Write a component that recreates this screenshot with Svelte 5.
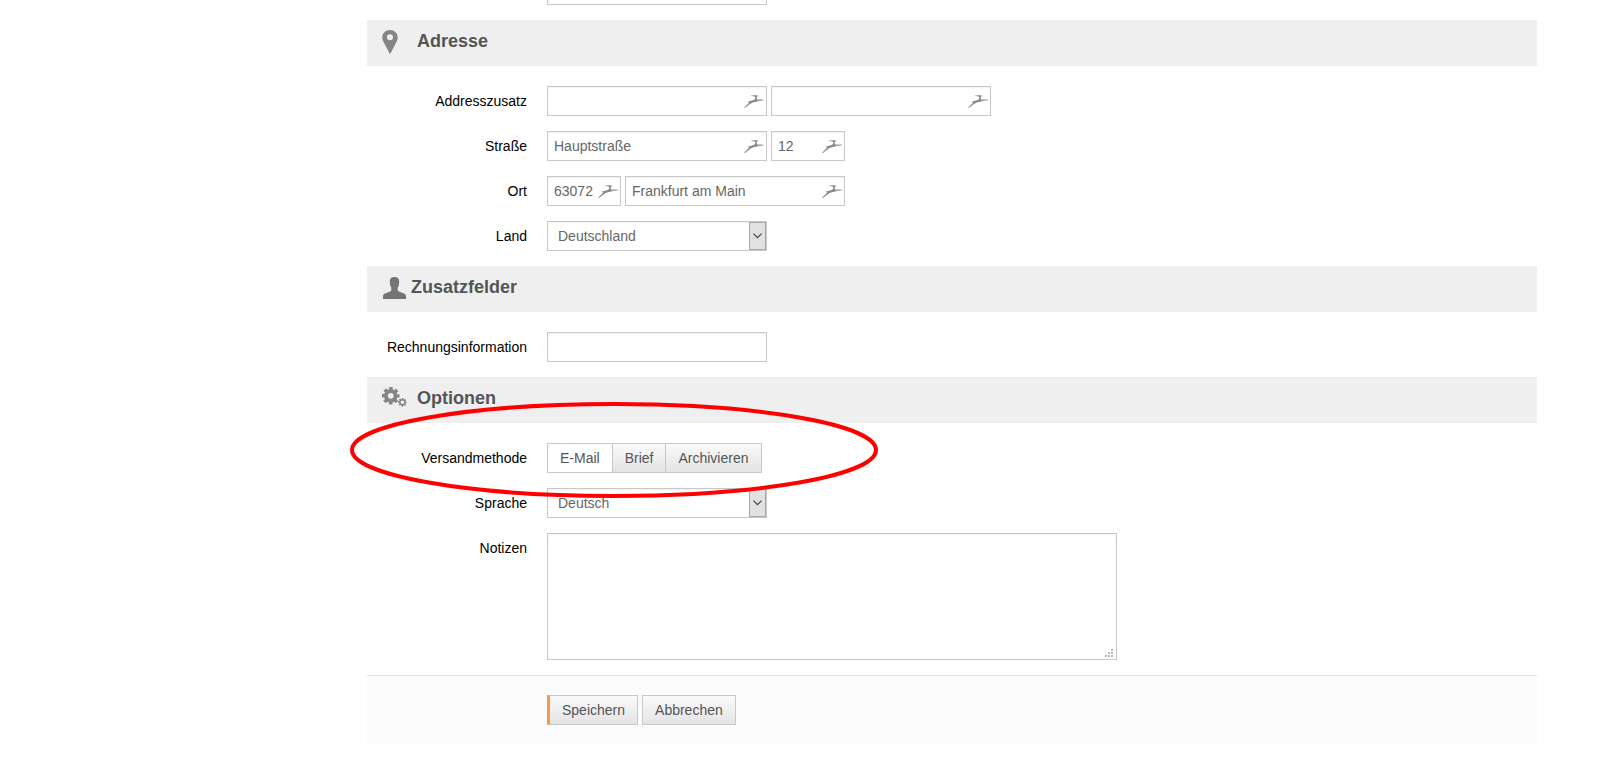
<script lang="ts">
  type Field = { id: string; label: string; value: string; short?: boolean };
  type Row = { label: string; fields: Field[] };

  const methods = ['E-Mail', 'Brief', 'Archivieren'];

  const addressRows: Row[] = $state([
    {
      label: 'Addresszusatz',
      fields: [
        { id: 'addition-1', label: 'Addresszusatz', value: '' },
        { id: 'addition-2', label: 'Addresszusatz 2', value: '' },
      ],
    },
    {
      label: 'Straße',
      fields: [
        { id: 'street', label: 'Straße', value: 'Hauptstraße' },
        { id: 'number', label: 'Hausnummer', value: '12', short: true },
      ],
    },
    {
      label: 'Ort',
      fields: [
        { id: 'zip', label: 'Postleitzahl', value: '63072', short: true },
        { id: 'city', label: 'Ort', value: 'Frankfurt am Main' },
      ],
    },
  ]);

  let phone = $state('');
  let country = $state('Deutschland');
  let invoiceInfo = $state('');
  let method = $state('E-Mail');
  let language = $state('Deutsch');
  let notes = $state('');
</script>

{#snippet dropdown(id: string, value: string, options: string[], onchange: (v: string) => void)}
  <div class="select">
    <select {id} {value} onchange={(e) => onchange(e.currentTarget.value)}>
      {#each options as opt}
        <option value={opt}>{opt}</option>
      {/each}
    </select>
    <span class="arrow">
      <svg width="9" height="6" viewBox="0 0 9 6" aria-hidden="true">
        <path d="M.5 .7 4.5 4.7 8.5 .7" fill="none" stroke="#444" stroke-width="1.2" />
      </svg>
    </span>
  </div>
{/snippet}

<form onsubmit={(e) => e.preventDefault()}>
  <div class="rows">
    <div class="row">
      <span class="name"></span>
      <input type="text" aria-label="Telefon" bind:value={phone} />
    </div>
  </div>

  <header>
    <svg width="30" height="24" viewBox="0 0 30 24" aria-hidden="true">
      <path
        fill="#858585"
        fill-rule="evenodd"
        d="M8 0c4.500 0 7.700 3.200 7.700 7.500 0 1.800-.6 3.400-1.500 5L8 24.200 1.800 12.500C.9 10.900.3 9.300.3 7.500.3 3.200 3.500 0 8 0zm0 4.300a3 3 0 1 0 0 6 3 3 0 0 0 0-6z"
      />
    </svg>
    <h2>Adresse</h2>
  </header>

  <div class="rows">
    {#each addressRows as row}
      <div class="row">
        <label class="name" for={row.fields[0].id}>{row.label}</label>
        {#each row.fields as field}
          <div class="field" class:short={field.short}>
            <input type="text" id={field.id} aria-label={field.label} bind:value={field.value} />
            <svg class="bird" width="20" height="14" viewBox="0 0 20 14" aria-hidden="true">
              <g fill="#8a8a8a">
                <path d="M6.300 .800 10 .200h3.700v1.300l-.8.500-.2 2.600 1.200.8-.8 1.200-4.300.9-3.200 1.800L.8 13.300l-.4-.8 4.800-4.900-1.800-.8 4.600-1.200 2.600-1.100.9-2.500-1.200-.6z" />
                <path d="M12.500 4.300 19.700 4.600v.9l-7.200 1z" opacity=".75" />
              </g>
            </svg>
          </div>
        {/each}
      </div>
    {/each}
    <div class="row">
      <label class="name" for="country">Land</label>
      {@render dropdown('country', country, ['Deutschland', 'Österreich', 'Schweiz'], (v) => (country = v))}
    </div>
  </div>

  <header>
    <svg width="24" height="24" viewBox="0 0 24 24" aria-hidden="true">
      <path
        fill="#757575"
        d="M12.500 1c3 0 4.700 1.500 4.700 4.200 0 1.500-.1 2.800-.4 4-.3 1.100-.6 1.800-1.100 2.500v2.100c0 1 .5 1.500 1.800 2l4.500 1.800c1.500.7 2 1.600 2 3V23H1v-2.400c0-1.400.5-2.300 2-3l4.500-1.800c1.300-.5 1.800-1 1.800-2v-2.100c-.5-.7-.8-1.400-1.100-2.500-.3-1.200-.4-2.500-.4-4C7.800 2.500 9.500 1 12.500 1z"
      />
    </svg>
    <h2>Zusatzfelder</h2>
  </header>

  <div class="rows">
    <div class="row">
      <label class="name" for="invoice-info">Rechnungsinformation</label>
      <input type="text" id="invoice-info" bind:value={invoiceInfo} />
    </div>
  </div>

  <header>
    <svg width="30" height="24" viewBox="0 0 30 24" aria-hidden="true">
      <g fill="none" stroke="#858585">
        <circle cx="8.800" cy="8.800" r="4.900" stroke-width="4" />
        <circle cx="8.800" cy="8.800" r="7.500" stroke-width="2.600" stroke-dasharray="3.500 2.390" stroke-dashoffset="1.750" />
        <circle cx="20.400" cy="15.300" r="2.600" stroke-width="1.600" />
        <circle cx="20.400" cy="15.300" r="3.700" stroke-width="1.300" stroke-dasharray="1.600 1.306" stroke-dashoffset=".8" />
      </g>
    </svg>
    <h2>Optionen</h2>
  </header>

  <div class="rows">
    <div class="row">
      <span class="name" id="method-label">Versandmethode</span>
      <div class="toggle" role="group" aria-labelledby="method-label">
        {#each methods as m}
          <button type="button" class:active={m === method} aria-pressed={m === method} onclick={() => (method = m)}>
            {m}
          </button>
        {/each}
      </div>
      <svg class="marker" width="528" height="96" viewBox="0 0 528 96" aria-hidden="true">
        <ellipse cx="264" cy="48" rx="262" ry="46" fill="none" stroke="#f00" stroke-width="4" />
      </svg>
    </div>
    <div class="row">
      <label class="name" for="language">Sprache</label>
      {@render dropdown('language', language, ['Deutsch', 'Englisch'], (v) => (language = v))}
    </div>
    <div class="row">
      <label class="name" for="notes">Notizen</label>
      <div class="notes">
        <textarea id="notes" bind:value={notes}></textarea>
        <svg class="grip" width="8" height="8" viewBox="0 0 8 8" aria-hidden="true">
          <path fill="#b9b9b9" d="M6 0h2v2H6zM3 3h2v2H3zM6 3h2v2H6zM0 6h2v2H0zM3 6h2v2H3zM6 6h2v2H6z" />
        </svg>
      </div>
    </div>
  </div>

  <footer>
    <button type="submit" class="primary">Speichern</button>
    <button type="button">Abbrechen</button>
  </footer>
</form>

<style>
  :global(body) {
    background: #fff;
  }

  :global(#app) {
    display: flow-root;
  }

  form {
    margin: -45px 71px 0 367px;
    font: 14px/20px 'Liberation Sans', Arial, sans-serif;
    color: #000;
  }

  header {
    display: flex;
    align-items: flex-start;
    gap: 5px;
    padding: 10px 15px 12px;
    background: #efefef;
  }

  h2 {
    margin: 0;
    font-size: 18px;
    line-height: 22px;
    font-weight: bold;
    color: #555;
  }

  .rows {
    display: flex;
    flex-direction: column;
    gap: 15px;
    padding: 20px 0 15px;
  }

  .row {
    position: relative;
    display: flex;
    align-items: flex-start;
    gap: 4px;
  }

  .name {
    width: 160px;
    margin-right: 16px;
    line-height: 30px;
    text-align: right;
  }

  input,
  select,
  textarea,
  button {
    box-sizing: border-box;
    margin: 0;
    border: 1px solid #c8c8c8;
    border-radius: 0;
    font: inherit;
    color: #666;
  }

  input,
  select,
  textarea {
    background: #fff;
    box-shadow: inset 0 1px 2px rgba(0, 0, 0, 0.06);
  }

  input {
    display: block;
    width: 220px;
    height: 30px;
    padding: 0 6px;
  }

  .field,
  .select,
  .notes {
    position: relative;
  }

  .short input {
    width: 74px;
  }

  .bird {
    position: absolute;
    top: 9px;
    right: 3px;
  }

  select {
    display: block;
    width: 220px;
    height: 30px;
    padding: 0 24px 0 10px;
    appearance: none;
  }

  .arrow {
    position: absolute;
    top: 1px;
    right: 1px;
    bottom: 1px;
    box-sizing: border-box;
    width: 17px;
    display: flex;
    align-items: center;
    justify-content: center;
    border: 1px solid #a9a9a9;
    background: #e1e1e1;
    pointer-events: none;
  }

  .notes {
    width: 570px;
  }

  textarea {
    display: block;
    width: 100%;
    height: 127px;
    padding: 5px 6px;
    resize: none;
  }

  .grip {
    position: absolute;
    right: 4px;
    bottom: 3px;
  }

  button {
    height: 30px;
    padding: 0 12px;
    background: linear-gradient(#fafafa, #e4e4e4);
    color: #555;
    cursor: pointer;
  }

  .toggle {
    display: flex;
  }

  .toggle button + button {
    margin-left: -1px;
  }

  .toggle .active {
    background: #fff;
  }

  .marker {
    position: absolute;
    top: -41px;
    left: -17px;
    z-index: 1;
    pointer-events: none;
  }

  footer {
    display: flex;
    gap: 4px;
    padding: 19px 0 20px 180px;
    border-top: 1px solid #e2e2e2;
    background: #fcfcfc;
  }

  .primary {
    border-left: 3px solid #f79a42;
  }
</style>
